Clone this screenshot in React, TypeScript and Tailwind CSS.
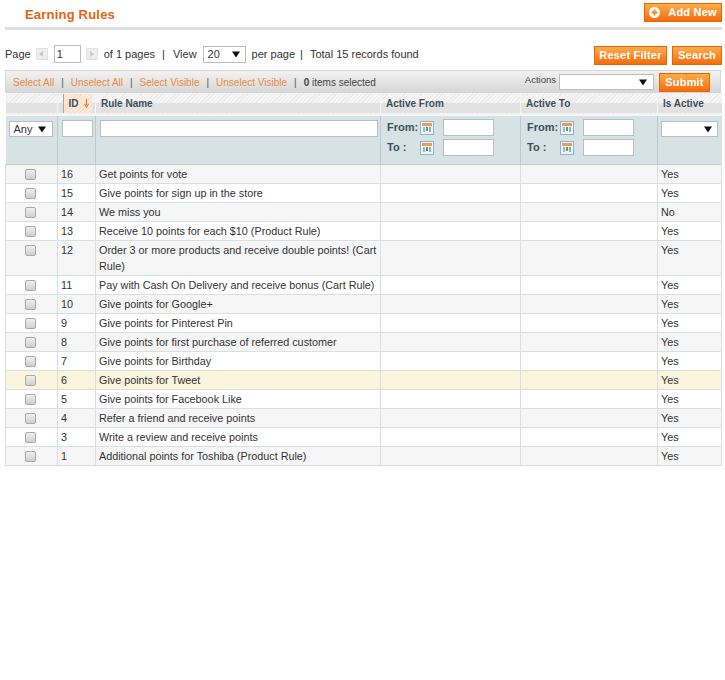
const rows: { id: string; name: string; active: string; hover?: boolean }[] = [
  { id: "16", name: "Get points for vote", active: "Yes" },
  { id: "15", name: "Give points for sign up in the store", active: "Yes" },
  { id: "14", name: "We miss you", active: "No" },
  { id: "13", name: "Receive 10 points for each $10 (Product Rule)", active: "Yes" },
  { id: "12", name: "Order 3 or more products and receive double points! (Cart Rule)", active: "Yes" },
  { id: "11", name: "Pay with Cash On Delivery and receive bonus (Cart Rule)", active: "Yes" },
  { id: "10", name: "Give points for Google+", active: "Yes" },
  { id: "9", name: "Give points for Pinterest Pin", active: "Yes" },
  { id: "8", name: "Give points for first purchase of referred customer", active: "Yes" },
  { id: "7", name: "Give points for Birthday", active: "Yes" },
  { id: "6", name: "Give points for Tweet", active: "Yes", hover: true },
  { id: "5", name: "Give points for Facebook Like", active: "Yes" },
  { id: "4", name: "Refer a friend and receive points", active: "Yes" },
  { id: "3", name: "Write a review and receive points", active: "Yes" },
  { id: "1", name: "Additional points for Toshiba (Product Rule)", active: "Yes" },
];

function Btn({ children, className = "" }: { children: React.ReactNode; className?: string }) {
  return (
    <div
      className={
        "flex items-center justify-center h-[19px] border border-[#ed6502] bg-gradient-to-b from-[#ffac47] to-[#f26c0a] text-white font-bold text-[11px] leading-none tracking-[0.2px] " +
        className
      }
    >
      {children}
    </div>
  );
}

function Caret({ className = "" }: { className?: string }) {
  return (
    <svg width="8" height="7" viewBox="0 0 8 7" className={className}>
      <path d="M0 0.5h8L4 6.5z" fill="#111" />
    </svg>
  );
}

function Cal() {
  return (
    <svg width="14" height="14" viewBox="0 0 14 14" className="shrink-0">
      <rect x="0.5" y="0.5" width="13" height="13" fill="#eef4fa" stroke="#8db4d6" />
      <rect x="2" y="2" width="10" height="3" fill="#ee9a55" />
      <rect x="3" y="6" width="2" height="5" fill="#9cc0b0" />
      <rect x="6" y="6" width="2" height="4" fill="#5f9e6a" />
      <rect x="9" y="6" width="2" height="5" fill="#8fb6a8" />
    </svg>
  );
}

function Box({ className = "" }: { className?: string }) {
  return <div className={"bg-white border border-[#bdbdbd] h-[17px] " + className} />;
}

function DateCell({ width }: { width: string }) {
  return (
    <div className={"flex flex-col gap-[3px] pt-[3px] pl-[6px] " + width}>
      {["From:", "To :"].map((l) => (
        <div key={l} className="flex items-center h-[17px]">
          <span className="w-[33px] font-bold text-[11px] text-[#3f4f5a] whitespace-nowrap">{l}</span>
          <Cal />
          <Box className="w-[51px] ml-[9px]" />
        </div>
      ))}
    </div>
  );
}

const headerBg =
  "bg-[linear-gradient(to_bottom,transparent_50%,#e2e2e2_50%),repeating-linear-gradient(135deg,#ebebeb_0px,#ebebeb_1px,#f5f5f5_1px,#f5f5f5_3px)]";

export default function App() {
  return (
    <div className="w-[725px] h-[680px] bg-white text-[#333] text-[11px] overflow-hidden font-['Liberation_Sans',Arial,sans-serif]">
      <div className="ml-[5px] mr-[3px] h-[30px] border-b-[3px] border-[#dfdfdf] flex justify-between items-start">
        <div className="pl-[20px] pt-[6px] text-[#e5640f] font-bold text-[13px] leading-[18px] tracking-[0.2px]">Earning Rules</div>
        <Btn className="w-[78px] mt-[3px] gap-[8px] shrink-0">
          <svg width="11" height="11" viewBox="0 0 11 11">
            <circle cx="5.5" cy="5.5" r="5.5" fill="#fff" />
            <path d="M2.5 5.5h6M5.5 2.5v6" stroke="#f58a1f" strokeWidth="2" />
          </svg>
          <span>Add New</span>
        </Btn>
      </div>

      <div className="ml-[5px] mr-[3px] h-[40px] flex items-start justify-between">
        <div className="flex items-center h-[16px] mt-[16px] text-[11px] whitespace-nowrap text-[#333]">
          <span>Page</span>
          <div className="w-[12px] h-[12px] bg-[#eeeeee] border border-[#e2e2e2] ml-[5px] flex items-center justify-center">
            <svg width="5" height="6" viewBox="0 0 5 6"><path d="M4 0v6L0 3z" fill="#c8c8c8" /></svg>
          </div>
          <div className="w-[27px] h-[18px] border border-[#bdbdbd] ml-[6px] pl-[2px] flex items-center text-[11px]">1</div>
          <div className="w-[12px] h-[12px] bg-[#eeeeee] border border-[#e2e2e2] ml-[5px] flex items-center justify-center">
            <svg width="5" height="6" viewBox="0 0 5 6"><path d="M1 0v6l4-3z" fill="#c8c8c8" /></svg>
          </div>
          <span className="ml-[6px]">of 1 pages</span>
          <span className="ml-[7px]">|</span>
          <span className="ml-[8px]">View</span>
          <div className="w-[43px] h-[17px] border border-[#bdbdbd] ml-[6px] pl-[4px] pr-[5px] flex items-center justify-between text-[11px]">
            <span>20</span>
            <Caret />
          </div>
          <span className="ml-[6px]">per page</span>
          <span className="ml-[5px]">|</span>
          <span className="ml-[7px]">Total 15 records found</span>
        </div>
        <div className="flex gap-[5px] mt-[16px]">
          <Btn className="w-[73px]">Reset Filter</Btn>
          <Btn className="w-[50px]">Search</Btn>
        </div>
      </div>

      <div className="ml-[5px] w-[716px]">
        <div className="h-[23px] border border-[#d6d6d6] border-b-0 bg-gradient-to-b from-[#f2f2f2] to-[#d6d6d6] flex items-center justify-between text-[10px] pl-[7px] pr-[10px]">
          <div className="flex items-center whitespace-nowrap text-[#555]">
            <span className="text-[#ec8a3c]">Select All</span>
            <span className="mx-[7px]">|</span>
            <span className="text-[#ec8a3c]">Unselect All</span>
            <span className="mx-[7px]">|</span>
            <span className="text-[#ec8a3c]">Select Visible</span>
            <span className="mx-[7px]">|</span>
            <span className="text-[#ec8a3c]">Unselect Visible</span>
            <span className="mx-[7px]">|</span>
            <span className="text-[#444]"><b>0</b> items selected</span>
          </div>
          <div className="flex items-center">
            <span className="text-[#444] text-[9.5px] mr-[3px] -mt-[3px]">Actions</span>
            <div className="w-[95px] h-[16px] bg-white border border-[#bdbdbd] flex items-center justify-end pr-[6px]">
              <Caret />
            </div>
            <Btn className="w-[51px] h-[18px] ml-[5px]">Submit</Btn>
          </div>
        </div>

        <table className="table-fixed border-collapse w-[716px]">
          <colgroup>
            <col className="w-[52px]" />
            <col className="w-[38px]" />
            <col className="w-[285px]" />
            <col className="w-[140px]" />
            <col className="w-[137px]" />
            <col className="w-[64px]" />
          </colgroup>
          <thead>
            <tr className={"h-[22px] border-b-2 border-[#f5f5f5] text-[10px] font-bold text-[#3f4f5a] " + headerBg}>
              <th className="border-r border-[#f5f5f5]" />
              <th className="border-r border-[#f5f5f5] p-0 pl-[5px] pr-[3px] text-left align-middle">
                <div className="h-[19px] pl-[2px] flex items-center justify-center gap-[5px] bg-[#fbdfc6] bg-[repeating-linear-gradient(135deg,#fbdcc0_0px,#fbdcc0_1px,#fdeadb_1px,#fdeadb_3px)] border-l border-[#a8a8a8] border-r border-r-[#e8e8e8]">
                  <span>ID</span>
                  <svg width="5" height="9" viewBox="0 0 5 9">
                    <path d="M2.5 0v6M0.5 5l2 3 2-3" stroke="#ee7a22" strokeWidth="1.2" fill="none" />
                  </svg>
                </div>
              </th>
              <th className="border-r border-[#f5f5f5] px-[5px] text-left">Rule Name</th>
              <th className="border-r border-[#f5f5f5] px-[5px] text-left">Active From</th>
              <th className="border-r border-[#f5f5f5] px-[5px] text-left">Active To</th>
              <th className="px-[5px] pr-0 text-left">Is Active</th>
            </tr>
          </thead>
          <tbody>
            <tr className="h-[49px] bg-[#d5e3e4] align-top border-b border-[#c8c8c8]">
              <td className="border-r border-[#bdc9ca] p-0 pt-[5px] pl-[3px]">
                <div className="w-[44px] h-[16px] bg-white border border-[#bdbdbd] flex items-center justify-between pl-[4px] pr-[6px] text-[11px]">
                  <span>Any</span>
                  <Caret />
                </div>
              </td>
              <td className="border-r border-[#bdc9ca] p-0 pt-[4px] pl-[4px]">
                <Box className="w-[31px]" />
              </td>
              <td className="border-r border-[#bdc9ca] p-0 pt-[4px] pl-[4px]">
                <Box className="w-[278px]" />
              </td>
              <td className="border-r border-[#bdc9ca] p-0">
                <DateCell width="w-[139px]" />
              </td>
              <td className="border-r border-[#bdc9ca] p-0">
                <DateCell width="w-[136px]" />
              </td>
              <td className="p-0 pt-[5px] pl-[3px]">
                <div className="w-[57px] h-[16px] bg-white border border-[#bdbdbd] flex items-center justify-end pr-[5px]">
                  <Caret />
                </div>
              </td>
            </tr>
            {rows.map((r, i) => {
              const bg = r.hover ? "bg-[#fcf5dd]" : i % 2 === 0 ? "bg-[#f6f6f6]" : "bg-white";
              return (
                <tr key={r.id} className={"align-top text-[10.8px] leading-[16px] border-b border-[#dadfe0] " + bg}>
                  <td className="border-x border-[#dadfe0] p-0">
                    <div className="flex justify-center pt-[4px] pr-[2px]">
                      <div className="w-[11px] h-[11px] rounded-[2px] border border-[#a9a9a9] bg-gradient-to-b from-[#f0f0f0] to-[#cfcfcf]" />
                    </div>
                  </td>
                  <td className="border-r border-[#dadfe0] p-0 pl-[3px] pt-[1px] pb-[1px]">{r.id}</td>
                  <td className="border-r border-[#dadfe0] p-0 pl-[3px] pr-[3px] pt-[1px] pb-[1px]">{r.name}</td>
                  <td className="border-r border-[#dadfe0] p-0" />
                  <td className="border-r border-[#dadfe0] p-0" />
                  <td className="border-r border-[#dadfe0] p-0 pl-[3px] pt-[1px] pb-[1px]">{r.active}</td>
                </tr>
              );
            })}
          </tbody>
        </table>
      </div>
    </div>
  );
}
